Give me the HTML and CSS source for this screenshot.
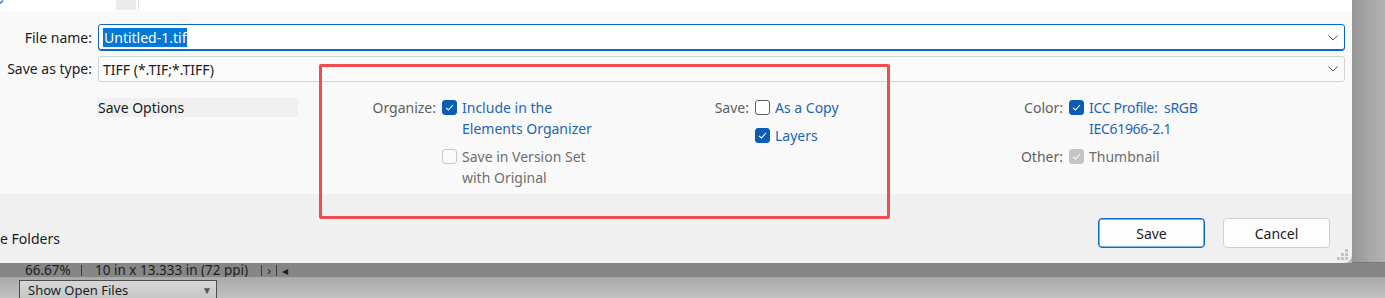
FILE: index.html
```html
<!DOCTYPE html>
<html lang="en">
<head>
  <meta charset="UTF-8" />
  <meta name="viewport" content="width=device-width, initial-scale=1.0"/>
  <title>Save As</title>
  <link rel="stylesheet" href="styles.css">
</head>
<body>

<div class="desktop">

  <div class="dialog">
    <div class="tabs">
      <svg class="tab-mark" width="6" height="4" viewBox="0 0 6 4"><polyline points="0,3.5 3,0.5" fill="none" stroke="#2a6fc0" stroke-width="1.4"/></svg>
      <span class="tab-block"></span>
    </div>

    <div class="fields">
      <div class="field-label">File name:</div>
      <div class="combo combo-focus">
        <span class="selected">Untitled-1.tif</span>
        <svg class="chevron" width="10" height="6" viewBox="0 0 10 6"><polyline points="0.5,0.5 5,5 9.5,0.5" fill="none" stroke="#555" stroke-width="1"/></svg>
      </div>
      <div class="field-label">Save as type:</div>
      <div class="combo">
        <span>TIFF (*.TIF;*.TIFF)</span>
        <svg class="chevron" width="10" height="6" viewBox="0 0 10 6"><polyline points="0.5,0.5 5,5 9.5,0.5" fill="none" stroke="#555" stroke-width="1"/></svg>
      </div>
    </div>

    <div class="options">
      <div class="options-cell">
        <div class="options-title">Save Options</div>
      </div>

      <div class="group">
        <span class="opt-label">Organize:</span>
        <span class="box checked"><svg width="15" height="15" viewBox="0 0 15 15"><polyline points="4,7.8 6.4,10 11,5" fill="none" stroke="#fff" stroke-width="1.1"/></svg></span>
        <span class="opt-text link">Include in the<br>Elements Organizer</span>
        <span></span>
        <span class="box disabled"></span>
        <span class="opt-text muted">Save in Version Set<br>with Original</span>
      </div>

      <div class="group">
        <span class="opt-label">Save:</span>
        <span class="box"></span>
        <span class="opt-text link">As a Copy</span>
        <span></span>
        <span class="box checked"><svg width="15" height="15" viewBox="0 0 15 15"><polyline points="4,7.8 6.4,10 11,5" fill="none" stroke="#fff" stroke-width="1.1"/></svg></span>
        <span class="opt-text link">Layers</span>
      </div>

      <div class="group">
        <span class="opt-label">Color:</span>
        <span class="box checked"><svg width="15" height="15" viewBox="0 0 15 15"><polyline points="4,7.8 6.4,10 11,5" fill="none" stroke="#fff" stroke-width="1.1"/></svg></span>
        <span class="opt-text link narrow">ICC Profile:&nbsp; sRGB<br>IEC61966-2.1</span>
        <span class="opt-label">Other:</span>
        <span class="box checked-off"><svg width="15" height="15" viewBox="0 0 15 15"><polyline points="4,7.8 6.4,10 11,5" fill="none" stroke="#fff" stroke-width="1.1"/></svg></span>
        <span class="opt-text muted">Thumbnail</span>
      </div>
    </div>

    <div class="footer">
      <span class="folders">e Folders</span>
      <div class="buttons">
        <button class="btn btn-default">Save</button>
        <button class="btn">Cancel</button>
      </div>
    </div>

    <svg class="grip" width="12" height="12" viewBox="0 0 12 12">
      <rect x="8" y="0" width="3" height="3" fill="#c4c4c4"/>
      <rect x="4" y="4" width="3" height="3" fill="#c4c4c4"/>
      <rect x="8" y="4" width="3" height="3" fill="#c4c4c4"/>
      <rect x="0" y="8" width="3" height="3" fill="#c4c4c4"/>
      <rect x="4" y="8" width="3" height="3" fill="#c4c4c4"/>
      <rect x="8" y="8" width="3" height="3" fill="#c4c4c4"/>
    </svg>

    <div class="highlight"></div>
  </div>

  <div class="side"></div>

  <div class="statusbar">
    <span class="zoom">66.67%</span>
    <span class="sep"></span>
    <span class="size">10 in x 13.333 in (72 ppi)</span>
    <span class="sep"></span>
    <span class="arrow">&rsaquo;</span>
    <span class="sep"></span>
    <span class="arrow">&#9666;</span>
  </div>

  <div class="panel">
    <div class="dropdown">
      <span>Show Open Files</span>
      <span class="caret">&#9660;</span>
    </div>
  </div>

</div>

</body>
</html>
```

FILE: styles.css
```css
body {
  margin: 0;
  width: 1385px;
  height: 298px;
  overflow: hidden;
  font-family: "Noto Sans", "Open Sans", sans-serif;
  font-size: 14px;
  color: #1b1b1b;
}

.desktop {
  display: grid;
  grid-template-columns: 1352px 1fr;
  grid-template-rows: 263px 14px 1fr;
  height: 298px;
  background: #b4b4b4;
}

/* dialog window */

.dialog {
  position: relative;
  display: flex;
  flex-direction: column;
  background: #f0f0f0;
  border-bottom-right-radius: 8px;
  overflow: hidden;
  z-index: 1;
}

.tabs {
  height: 11px;
  background: #fff;
  display: flex;
  align-items: flex-start;
}

.tab-mark {
  display: block;
}

.tab-block {
  width: 20px;
  height: 10px;
  margin-left: 110px;
  background: #ebebeb;
  border-right: 2px solid #fff;
  box-shadow: 1px 0 0 #e2e2e2;
}

.fields {
  background: #f9f9f9;
  display: grid;
  grid-template-columns: 92px 1fr;
  column-gap: 6px;
  row-gap: 5px;
  padding: 13px 7px 0 0;
  align-items: center;
}

.field-label {
  text-align: right;
  line-height: 20px;
}

.combo {
  height: 24px;
  border: 1px solid #d3d3d3;
  border-radius: 3px;
  background: #fbfbfb;
  display: flex;
  align-items: center;
  justify-content: space-between;
  padding: 0 5px 0 4px;
}

.combo-focus {
  height: 25px;
  background: #fff;
  border-color: #0a67c2;
  box-shadow: inset 0 -1px 0 #0a67c2;
}

.selected {
  background: #0078d7;
  color: #fff;
  padding: 0 1px;
  line-height: 19px;
}

.chevron {
  display: block;
  margin-right: 1px;
}

/* options */

.options {
  background: #f9f9f9;
  display: grid;
  grid-template-columns: 259px 313px 314px 1fr;
  padding: 15px 0 6px 97px;
  align-items: start;
}

.options-title {
  width: 200px;
  height: 19px;
  line-height: 19px;
  background: #f0f0f0;
  padding-left: 1px;
  margin-top: 1px;
}

.group {
  display: grid;
  grid-template-columns: 86px 20px 1fr;
  row-gap: 7px;
  align-items: start;
  line-height: 21px;
}

.opt-label {
  text-align: right;
  padding-right: 6px;
  color: #5f5f5f;
}

.opt-text {
  white-space: nowrap;
}

.narrow {
  letter-spacing: -0.3px;
}

.link {
  color: #1c65b7;
}

.muted {
  color: #6e6e6e;
}

.box {
  box-sizing: border-box;
  width: 15px;
  height: 15px;
  margin-top: 3px;
  border: 1px solid #5d5d5d;
  border-radius: 3px;
  background: #fff;
}

.box svg {
  display: block;
  margin: -1px;
}

.box.checked {
  background: #0a5cb5;
  border-color: #0a5cb5;
}

.box.disabled {
  border-color: #c8c8c8;
  background: #fafafa;
}

.box.checked-off {
  background: #c4c4c4;
  border-color: #c4c4c4;
}

/* footer */

.footer {
  flex: 1;
  display: flex;
  justify-content: space-between;
  align-items: flex-start;
  padding: 24px 22px 0 0;
}

.folders {
  line-height: 20px;
  margin-top: 11px;
}

.buttons {
  display: flex;
  gap: 18px;
}

.btn {
  width: 107px;
  height: 30px;
  font-family: inherit;
  font-size: 14px;
  color: #1b1b1b;
  background: #fdfdfd;
  border: 1px solid #d0d0d0;
  border-radius: 4px;
}

.btn-default {
  border-color: #0a67c2;
  box-shadow: inset 0 0 0 0.5px #0a67c2;
}

.grip {
  position: absolute;
  right: 3px;
  bottom: 2px;
}

.highlight {
  position: absolute;
  left: 319px;
  top: 64px;
  width: 565px;
  height: 149px;
  border: 3px solid #ef4e4e;
  border-radius: 2px;
}

/* application behind */

.side {
  background: linear-gradient(to right, #969696, #a9a9a9 60%, #b2b2b2);
  border-bottom: 1px solid #7a7a7a;
}

.statusbar {
  grid-column: 1 / 3;
  background: #868686;
  display: flex;
  align-items: center;
  padding-left: 18px;
  font-size: 13.5px;
  line-height: 13px;
  color: #1e1e1e;
}

.zoom {
  width: 52px;
  padding-left: 7px;
}

.sep {
  width: 1px;
  height: 11px;
  background: #3c3c3c;
  margin: 0 4px;
}

.size {
  padding: 0 9px 0 9px;
}

.arrow {
  font-size: 12px;
  padding: 0 1px;
}

.panel {
  grid-column: 1 / 3;
  background: linear-gradient(to bottom, #a9a9a9, #c3c3c3);
  padding: 3px 0 0 19px;
}

.dropdown {
  box-sizing: border-box;
  width: 198px;
  height: 20px;
  border: 1px solid #4d4d4d;
  background: linear-gradient(to bottom, #d6d6d6, #c6c6c6);
  display: flex;
  justify-content: space-between;
  align-items: center;
  padding: 0 0 0 8px;
  font-size: 13px;
  color: #1e1e1e;
}

.caret {
  font-size: 10px;
  color: #555;
  margin-right: 4px;
}
```
